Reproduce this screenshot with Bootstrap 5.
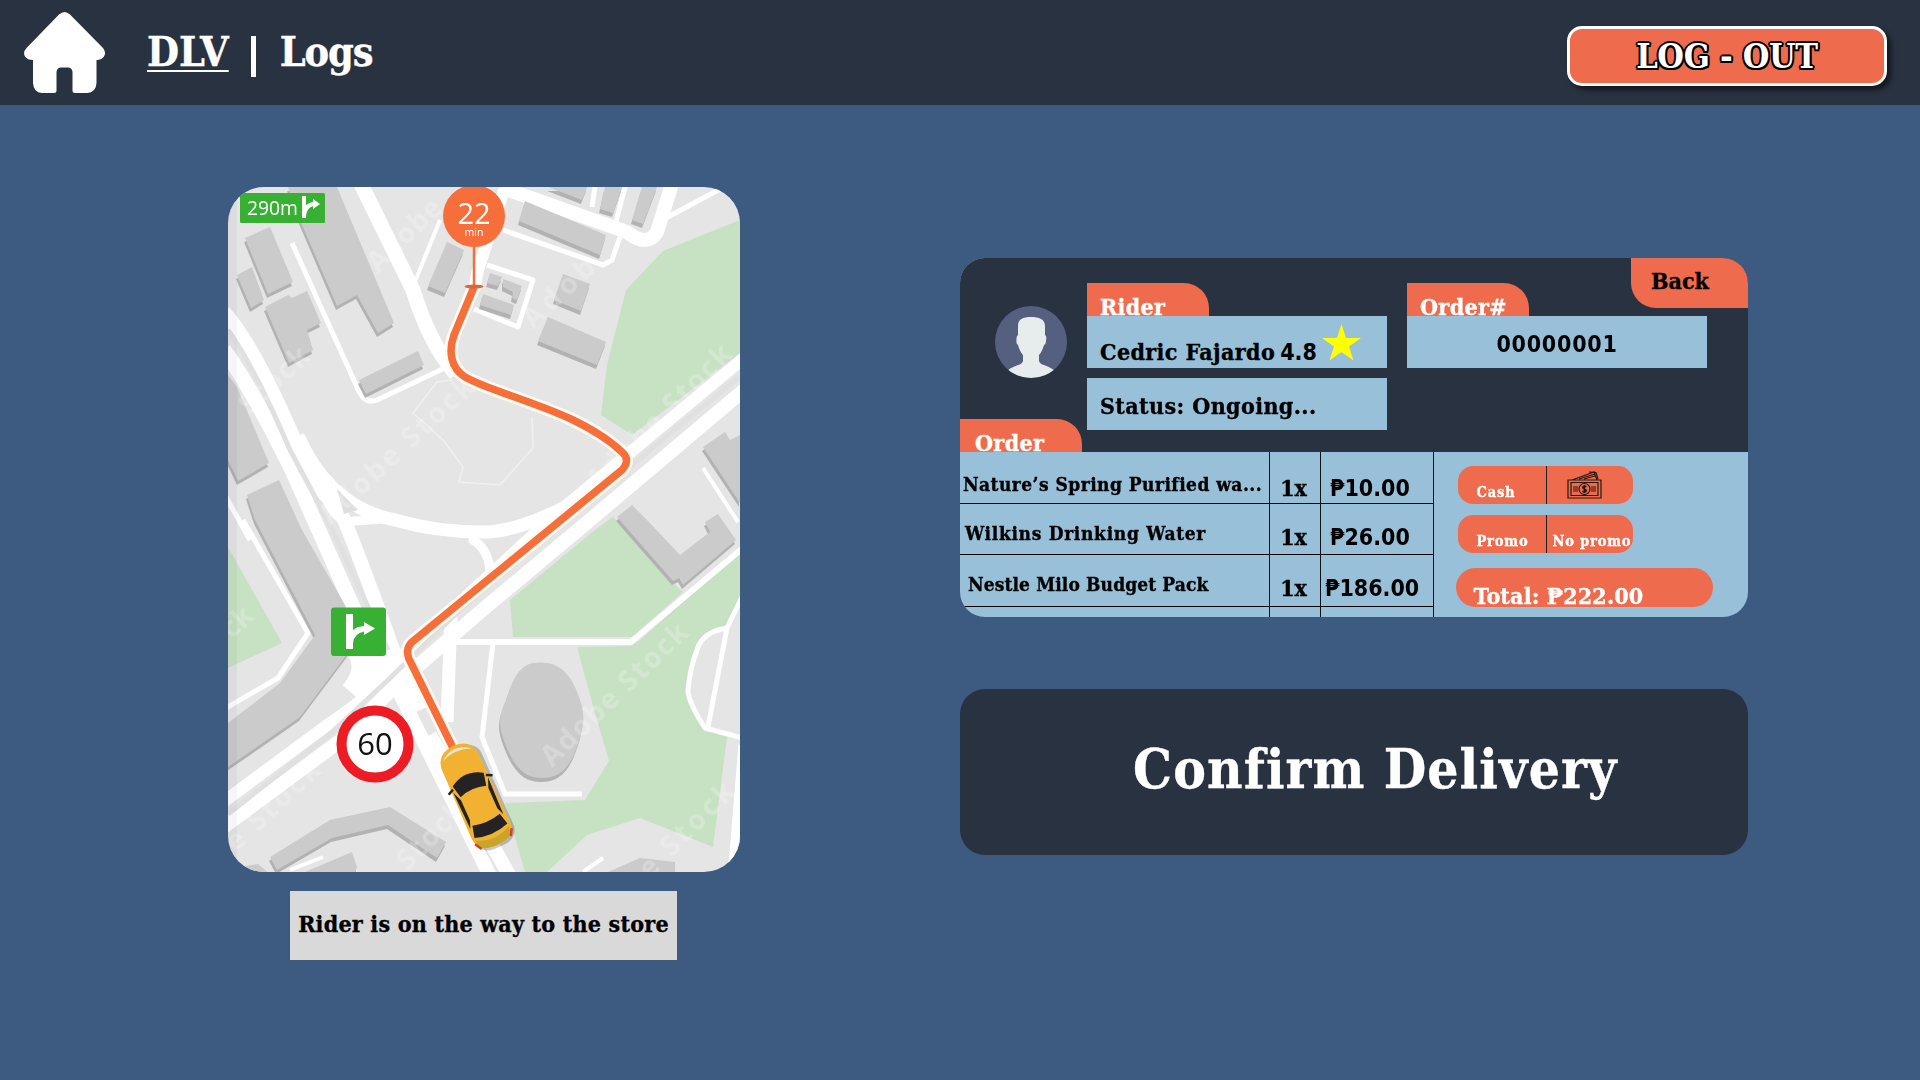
<!DOCTYPE html>
<html lang="en">
<head>
<meta charset="utf-8">
<meta name="viewport" content="width=device-width, initial-scale=1">
<title>DLV | Logs</title>
<link rel="stylesheet" href="https://cdn.jsdelivr.net/npm/bootstrap@5.3.0/dist/css/bootstrap.min.css">
<style>
:root{--ink:#293241;--sea:#3d5a80;--sky:#98c1d9;--coral:#ee6c4d}
body{background:var(--sea);font-family:"DejaVu Serif Condensed","DejaVu Serif",serif;font-stretch:condensed;font-weight:700;color:#000;height:1080px;overflow:hidden}
.topbar{background:var(--ink);height:105px;line-height:105px;font-size:41px;color:#fff;padding:0 33px 0 24px}
.home-ico{width:81px;height:81px}
.t{display:inline-block;white-space:nowrap;-webkit-text-stroke:.35px currentColor}
.brand{margin-left:42px;text-underline-offset:4px;text-decoration-thickness:2px}
.divider{margin:7px 0 0 22px;width:5px;height:41px;background:#fff}
.page-name{margin-left:24px;letter-spacing:-1.1px}
.logout{width:320px;height:60px;border:3px solid #fff;border-radius:15px;background:var(--coral);box-shadow:4px 4px 5px rgba(0,0,0,.55);font-size:34px;line-height:50px;letter-spacing:-.3px;text-shadow:2px 0 #000,-2px 0 #000,0 2px #000,0 -2px #000,1.5px 1.5px #000,-1.5px 1.5px #000,1.5px -1.5px #000,-1.5px -1.5px #000;margin-top:7px}
.left-pane{margin-left:228px;width:512px;padding-top:82px}
.route-map{width:512px;height:685px;border-radius:36px;overflow:hidden;display:block;font-stretch:normal}
.notice{width:387px;height:69px;line-height:65px;margin:19px 1px 0 0;background:#d9d9d9;font-size:23px;letter-spacing:.22px}
.right-pane{margin-left:220px;width:788px;padding-top:153px}
.ticket{border-radius:25px;height:359px;background:var(--sky);font-size:23px}
.ticket-top{background:var(--ink);height:194px}
.who{width:127px}
.avatar{width:72px;height:72px;margin:48px 0 0 35px}
.tab{width:122px;height:33px;line-height:48px;background:var(--coral);color:#fff;border-radius:0 25px 0 0;overflow:hidden;padding-left:13px;letter-spacing:.35px}
.who .tab{padding-left:15px}
.fields{width:300px;padding-top:25px;margin-right:20px}
.slot{height:52px;background:var(--sky);padding-left:13px;letter-spacing:.4px}
.slot-a{line-height:72px}.slot-b{line-height:56px}
.slot-gap{margin-top:10px}
.score{margin-left:5px;letter-spacing:0}
.star{width:39px;height:37px;margin:8px 0 0 5px}
.num{font-family:"DejaVu Sans Condensed","DejaVu Sans",sans-serif;font-stretch:condensed;-webkit-text-stroke:0}
.num .t{-webkit-text-stroke:0}
.order-no{letter-spacing:.75px}
.back-btn{top:0;right:0;width:117px;height:50px;line-height:45px;background:var(--coral);border-radius:0 25px 0 25px;padding-left:20px}
.rows{height:165px}
.rows>div{border-right:1px solid #111}
.c-name{width:310px}.c-qty{width:51px}.c-price{width:113px}
.c-qty .t{margin-left:-3px}
.cell{height:51.7px;line-height:66px;border-bottom:1px solid #000}
.cell:first-child{line-height:72px}
.c-name .cell{font-size:19px;line-height:59px}
.c-name .cell:first-child{line-height:65px}
.item-1{padding-left:3px;letter-spacing:.45px}.item-2{padding-left:5px;letter-spacing:.68px}.item-3{padding-left:8px;letter-spacing:.12px}
.price{padding-left:9px}.price-wide{padding-left:4px}
.pay{padding:14px 0 0 23.5px}
.pill{width:175px;height:38px;border-radius:15px;background:var(--coral);color:#fff;font-size:14.5px;line-height:51px;letter-spacing:.8px}
.pill>div:first-child{width:89px;border-right:1px solid #222;padding-left:19px}
.pill+.pill{margin-top:11px}
.cash-ico{width:36px;height:28px;margin:5px 0 0 20px}
.no-promo{margin-left:6px}
.total{width:257px;height:39px;line-height:56px;border-radius:20px;background:var(--coral);color:#fff;padding-left:18px;overflow:hidden;margin:15px 0 0 -2px;letter-spacing:.15px}
.confirm{height:166px;line-height:160px;border-radius:25px;background:var(--ink);color:#fff;font-size:54.5px;margin-top:72px;padding-left:173px;letter-spacing:1.1px}
.bld{fill:#cbcbcb;filter:drop-shadow(-1px 4px 0 #b2b2b2)}
.park{fill:#c7e1c3}
.road{fill:none;stroke:#fff;stroke-linejoin:round}
.wm{font:700 28px "Open Sans",sans-serif;fill:#fff;opacity:.24}
.sign{font-family:"Open Sans",sans-serif;font-weight:400;font-stretch:normal}
</style>
<script src="https://cdn.jsdelivr.net/npm/bootstrap@5.3.0/dist/js/bootstrap.bundle.min.js"></script>
</head>
<body>
<header class="topbar d-flex align-items-center">
  <svg class="home-ico" viewBox="0 0 81 81" fill="#fff"><path d="M35 2.500Q40.500-2.500 46 2.500L79 36Q82.500 40.500 80 44.500Q77.500 48 72.500 48V71Q72 80.500 63 81H51Q48.500 81 48.500 78.500V60Q48 55.500 44 55.500H37Q33 55.500 32.500 60V78.500Q32.500 81 30 81H18Q9.500 80.500 9 71V48Q3.500 48 1 44.500Q-1.500 40.500 2.500 36Z"/></svg>
  <a class="t brand text-white" href="#">DLV</a>
  <span class="divider"></span>
  <span class="t page-name">Logs</span>
  <button class="logout ms-auto p-0 text-white fw-bold text-center">LOG - OUT</button>
</header>
<main class="d-flex">
  <section class="left-pane d-flex flex-column align-items-center">
    <svg class="route-map" viewBox="228 187 512 685">
      <rect x="228" y="187" width="512" height="685" fill="#e5e5e5"/>
      <g class="park">
        <path d="M740 220L663 251L626 290L607 365L601 415L632 435L740 353Z"/>
        <path d="M595 530L613 517L673 583L683 592L632 637H513L510 600Z"/>
        <path d="M740 550L640 640L630 646L577 647L595 713L609 761L585 800L505 803L525 872H547L587 835L640 818L713 847L727 737L740 737Z"/>
        <path d="M228 547L282 643L228 668Z"/>
      </g>
      <path d="M740 600L727 628Q702 632 697 650Q690 668 688 690Q688 702 705 728L740 737Z" fill="#e5e5e5"/>
      <path d="M453 380L437 382L413 413L443 440L463 467L459 482L500 485L533 448L532 417" fill="none" stroke="#f0f0f0" stroke-width="1.500"/>
      <g class="road">
        <path stroke-width="14" d="M224 312Q250 340 288 425T328 492T395 655"/>
        <path stroke-width="15" d="M224 350Q250 385 292 470L372 650"/>
        <path stroke-width="17" d="M395 655L420 710"/>
        <path stroke-width="14" d="M398 690L492 880M430 735L512 880"/>
        <path stroke-width="12" d="M744 358L556 514L405 653Q380 690 330 723L222 803"/>
        <path stroke-width="14" d="M744 390L590 520L480 612L395 686L340 741L222 828"/>
        <path stroke-width="30" d="M362 650Q374 672 354 695M366 655L396 678"/>
        <path stroke-width="15" d="M360 182L413 290Q430 345 456 374"/>
        <path stroke-width="4" d="M440 220L412 289"/>
        <path stroke-width="5" d="M292 243L357 387Q364 405 377 400L447 367"/>
        <path stroke-width="13" d="M298 436Q330 508 395 520Q440 533 490 532Q530 528 585 496"/>
        <path stroke-width="9" stroke-linecap="round" d="M324 494Q336 525 355 521L395 518M473 540Q490 550 490 575"/>
        <path stroke-width="6" d="M452 642H631L744 547"/>
        <path stroke-width="13" d="M451 615L447 722"/>
        <path stroke-width="5" d="M493 643L482 737L505 794H582"/>
        <path stroke-width="5" d="M742 597L727 628L708 727M727 628Q702 632 697 650Q690 668 688 690Q688 702 705 728L742 738"/>
        <path stroke-width="11" d="M744 745L733 876"/>
        <path stroke-width="5" d="M243 520L308 633L278 678L226 708M226 497L250 540"/>
        <path stroke-width="14" d="M500 187L627 232Q647 248 657 232L672 184"/>
        <path stroke-width="5" d="M595 187L592 207M625 187L616 222M666 218L722 188L740 180M503 230L603 265L612 260L620 237"/>
        <path stroke-width="12" d="M504 190L478 270L474 290"/>
        <path stroke-width="5" d="M487 265L533 280L518 327L474 309"/>
        <path stroke-width="4" d="M703 468L738 522M583 872L603 858M290 870L323 857"/>
      </g>
      <path d="M337 489L358 510L344 514Z" fill="#dedede"/>
      <g fill="none" stroke="#e0e0e0" stroke-width="5"><path d="M228 330Q255 368 290 450L330 525L388 650"/><path d="M740 376L575 512L460 610L388 680L330 734L228 814"/></g>
      <g class="bld">
        <path d="M245 238L270 227L293 282L268 294Z"/>
        <path d="M237 275L252 267L264 300L251 308Z"/>
        <path d="M265 307L288 295L292 298L307 291L321 323L307 330L313 350L289 363Z"/>
        <path d="M288 187H337L394 323L378 333L357 295L337 306L300 220Z"/>
        <path d="M359 380L418 351L424 365L366 394Z"/>
        <path d="M228 375L237 387L269 463L238 481L228 460Z"/>
        <path d="M247 495L279 480L302 530L345 605L356 632L348 653L300 717L228 767V723L280 683L315 635L255 520Z"/>
        <path d="M270 857L330 820L390 807L446 842L437 858L388 825L332 838L277 870Z"/>
        <path d="M305 872L352 852L357 867L355 872ZM245 866L258 864L270 874H240Z"/>
        <path d="M447 242L464 250L445 293L428 286Z"/>
        <path d="M525 201L606 235L600 255L519 221Z"/>
        <path d="M548 187H587L582 200Z"/>
        <path d="M605 187H622L613 213L600 209ZM642 187H657L643 224L632 220Z"/>
        <path d="M563 274L590 284L581 311L554 300Z"/>
        <path d="M548 317L606 342L597 365L538 341Z"/>
        <path d="M490 273L502 277L498 286L487 283ZM503 279L522 286L517 300L512 298L513 292L503 287ZM483 294L514 305L511 315L480 305Z"/>
        <path d="M703 447L725 432L730 440L740 435V503Z"/>
        <path d="M617 517L632 505L647 520L680 555L710 532L705 522L718 514L736 540L683 585L679 578L673 581Z"/>
        <path d="M533 663C560 659 572 675 580 700C586 716 584 730 574 755C566 772 556 778 542 778C525 778 515 768 506 746C498 726 498 718 506 700C513 677 520 666 533 663Z"/>
        <path d="M608 872L640 858L675 862V872Z"/>
      </g>
      <g class="wm">
        <text transform="translate(552 768) rotate(-44)" textLength="192">Adobe Stock</text>
        <text transform="translate(330 526) rotate(-43)" textLength="200">Adobe Stock</text>
        <text transform="translate(598 492) rotate(-45)" textLength="192">Adobe Stock</text>
        <text transform="translate(533 330) rotate(-43)" textLength="88">Adob</text>
        <text transform="translate(378 274) rotate(-44)" textLength="92">Adobe</text>
        <text transform="translate(250 416) rotate(-43)" textLength="84">Stock</text>
        <text transform="translate(236 853) rotate(-43)" textLength="118">e Stock</text>
        <text transform="translate(650 880) rotate(-45)" textLength="122">e Stock</text>
        <text transform="translate(232 640) rotate(-43)" textLength="32">ck</text>
        <text transform="translate(408 872) rotate(-45)" textLength="84">Stock</text>
      </g>
      <rect x="228" y="187" width="9" height="685" fill="#000" opacity=".035"/>
      <path d="M474 287L454 335C448 352 451 368 465 377C490 391 530 400 573 420Q604 435 622 452Q631 460 622 470L412 642Q405 649 409 659L453 748" fill="none" stroke="#fffaf2" stroke-width="13"/>
      <path d="M474 287L454 335C448 352 451 368 465 377C490 391 530 400 573 420Q604 435 622 452Q631 460 622 470L412 642Q405 649 409 659L453 748" fill="none" stroke="#f66f3a" stroke-width="7.500"/>
      <path d="M474 245V286" stroke="#f0713c" stroke-width="2.500"/><ellipse cx="474" cy="286.500" rx="9.500" ry="2" fill="#d9673c"/>
      <circle cx="474" cy="216" r="31" fill="#f66f3a"/>
      <g class="sign" fill="#fff">
        <text x="474" y="224" font-size="29" text-anchor="middle">22</text>
        <text x="474" y="236" font-size="11" text-anchor="middle" textLength="19" lengthAdjust="spacingAndGlyphs">min</text>
        <rect x="240" y="193" width="85" height="30" rx="1.500" fill="#37b034"/>
        <text x="247" y="214.500" font-size="20" textLength="51" lengthAdjust="spacingAndGlyphs">290m</text>
      </g>
      <path d="M302 196H306V205Q309 202.500 313 202V199L320 204L313 209V206Q306 208 306 218H302Z" fill="#fff"/>
      <rect x="331" y="607.500" width="55" height="48.500" rx="3" fill="#37b034"/>
      <path d="M346 614H353V630Q357 626.500 364 626V622L375 628.500L364 635V631.500Q354 633.500 353 643V649H346Z" fill="#fff"/>
      <circle cx="375" cy="744" r="33.500" fill="#fff" stroke="#ed1c24" stroke-width="10"/>
      <text class="sign" x="375" y="755" font-size="31" text-anchor="middle" fill="#111">60</text>
      <g transform="translate(475.500 796) rotate(-24)">
        <rect x="-20" y="-51" width="43" height="107" rx="15" fill="#000" opacity=".22"/>
        <path d="M-20-36Q-20-54 0-55Q20-54 20-36L21 38Q20 53 0 54Q-20 53-21 38Z" fill="#f1b232"/>
        <path d="M-16-45Q0-58 16-45Q0-52-16-45" fill="#e8e4d0"/>
        <path d="M-18 41Q0 50 18 41L17 50Q0 57-17 50Z" fill="#c9a42c"/>
        <path d="M-17-18Q0-29 17-18L14-5Q0-10-14-5Z" fill="#252226"/>
        <path d="M-15 26Q0 30 15 26L18 38Q0 44-18 38Z" fill="#252226"/>
        <path d="M-19-12L-15-2V20L-18 28ZM19-12L15-2V20L18 28Z" fill="#252226"/>
        <path d="M-24-12L-18-15M24-12L18-15" stroke="#222" stroke-width="2.500"/>
        <path d="M-20 44L-16 51M20 44L16 51" stroke="#d4411f" stroke-width="2.500"/>
      </g>
    </svg>
    <div class="notice text-center"><span class="t">Rider is on the way to the store</span></div>
  </section>
  <section class="right-pane">
    <article class="ticket position-relative overflow-hidden">
      <div class="ticket-top d-flex">
        <div class="who d-flex flex-column">
          <svg class="avatar" viewBox="0 0 72 72"><defs><clipPath id="av"><circle cx="36" cy="36" r="36"/></clipPath></defs><circle cx="36" cy="36" r="36" fill="#556080"/><path clip-path="url(#av)" fill="#e7eced" d="M23 20C23 13 28 11 36 11S50 13 50 20V29Q52 30 51 35Q51 38 49 39Q47 46 44 49V55Q45 58 49 59Q58 62 62 67V74H10V67Q14 62 23 59Q27 58 28 55V49Q25 46 23 39Q21 38 21.500 35Q21 30 23 29Z"/></svg>
          <div class="tab mt-auto"><span class="t">Order</span></div>
        </div>
        <div class="fields">
          <div class="tab"><span class="t">Rider</span></div>
          <div class="slot slot-a d-flex"><span class="t">Cedric Fajardo</span><span class="t num score">4.8</span>
            <svg class="star" viewBox="0 0 39 37"><path fill="#ff0" d="M19.500 0L24 14H39L27 22.500L31.500 36.500L19.500 28L7.500 36.500L12 22.500L0 14H15Z"/></svg></div>
          <div class="slot slot-b slot-gap"><span class="t">Status: Ongoing...</span></div>
        </div>
        <div class="fields">
          <div class="tab"><span class="t">Order#</span></div>
          <div class="slot slot-b text-center p-0"><span class="t num order-no">00000001</span></div>
        </div>
      </div>
      <a class="back-btn position-absolute text-black text-decoration-none" href="#"><span class="t">Back</span></a>
      <div class="rows d-flex">
        <div class="c-name">
          <div class="cell item-1"><span class="t">Nature’s Spring Purified wa...</span></div>
          <div class="cell item-2"><span class="t">Wilkins Drinking Water</span></div>
          <div class="cell item-3"><span class="t">Nestle Milo Budget Pack</span></div>
        </div>
        <div class="c-qty text-center">
          <div class="cell"><span class="t">1x</span></div><div class="cell"><span class="t">1x</span></div><div class="cell"><span class="t">1x</span></div>
        </div>
        <div class="c-price num">
          <div class="cell price"><span class="t">₱10.00</span></div>
          <div class="cell price"><span class="t">₱26.00</span></div>
          <div class="cell price-wide"><span class="t">₱186.00</span></div>
        </div>
        <aside class="pay">
          <div class="pill d-flex"><div><span class="t">Cash</span></div>
            <svg class="cash-ico" viewBox="0 0 36 28" fill="none" stroke="#24180f" stroke-width="1.200"><path d="M1 9H34V27H1ZM4 11.500H31V24.500H4ZM5 9L27 1L30 9M12 8L28 3M17 8L28 5M22 1L29 1.500L31 8"/><circle cx="17.500" cy="18" r="5.500"/><path d="M6 16H11M6 18H11M6 20H11M24 16H29M24 18H29M24 20H29"/><path stroke-width="1.500" d="M19.500 15.500Q16 14.500 15.700 16.500Q16 17.700 17.500 18T19.300 19.600Q18.500 21.500 15.500 20.300M17.500 14V22"/></svg></div>
          <div class="pill d-flex"><div><span class="t">Promo</span></div><span class="t no-promo">No promo</span></div>
          <div class="total"><span class="t">Total: ₱222.00</span></div>
        </aside>
      </div>
    </article>
    <div class="confirm"><span class="t">Confirm Delivery</span></div>
  </section>
</main>
</body>
</html>
